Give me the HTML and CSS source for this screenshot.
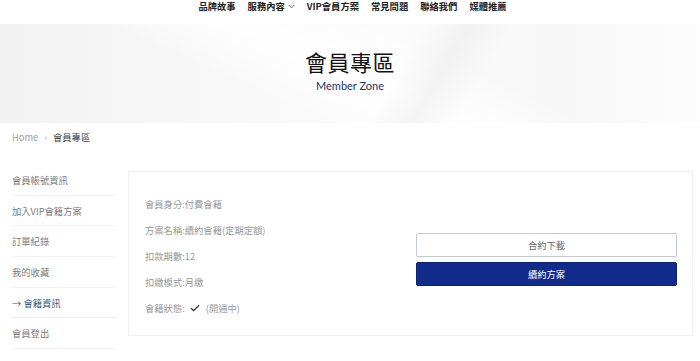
FILE: index.html
```html
<!DOCTYPE html>
<html>
<head>
    <title>會員專區</title>
    <meta name="viewport" content="width=device-width, initial-scale=1" charset="UTF-8">
    <link rel="stylesheet" href="styles.css">
</head>
<body>
<header class="topnav">
    <a href="#">品牌故事</a>
    <a href="#">服務內容 <svg class="chev" width="7" height="5" viewBox="0 0 7 5"><path d="M0.8 1 L3.5 3.8 L6.2 1" fill="none" stroke="#555" stroke-width="0.9"/></svg></a>
    <a href="#" class="vip">VIP會員方案</a>
    <a href="#">常見問題</a>
    <a href="#">聯絡我們</a>
    <a href="#">媒體推薦</a>
</header>

<section class="hero">
    <h1>會員專區</h1>
    <p>Member Zone</p>
</section>

<nav class="crumbs">
    <a href="#">Home</a>
    <span class="sep">›</span>
    <span class="here">會員專區</span>
</nav>

<main class="member">
    <ul class="side">
        <li><a href="#">會員帳號資訊</a></li>
        <li><a href="#">加入VIP會籍方案</a></li>
        <li><a href="#">訂單紀錄</a></li>
        <li><a href="#">我的收藏</a></li>
        <li class="active"><a href="#">→ 會籍資訊</a></li>
        <li><a href="#">會員登出</a></li>
    </ul>

    <div class="card">
        <div class="info">
            <p>會員身分:付費會籍</p>
            <p>方案名稱:續約會籍(定期定額)</p>
            <p>扣款期數:12</p>
            <p>扣繳模式:月繳</p>
            <p>會籍狀態: <svg class="check" width="10" height="8" viewBox="0 0 10 8"><path d="M1 4.2 L3.6 6.6 L9 1.2" fill="none" stroke="#333" stroke-width="1.3"/></svg> (開通中)</p>
        </div>
        <div class="actions">
            <button class="btn outline">合約下載</button>
            <button class="btn solid">續約方案</button>
        </div>
    </div>
</main>
</body>
</html>
```
FILE: styles.css
```css
body {
    margin: 0;
    background: #fff;
    font-family: "Noto Sans CJK TC", "Noto Sans", sans-serif;
    color: #666;
}

a { text-decoration: none; color: inherit; }

/* top menu */
.topnav {
    display: flex;
    justify-content: center;
    align-items: center;
    gap: 12px;
    padding-left: 5px;
    padding-bottom: 12px;
    box-sizing: border-box;
    height: 24px;
    font-size: 9.3px;
    font-weight: 700;
    color: #222;
}
.topnav a { display: flex; align-items: center; gap: 3px; line-height: 12px; }

/* banner */
.hero {
    height: 99px;
    text-align: center;
    padding-top: 24px;
    box-sizing: border-box;
    background:
        linear-gradient(120deg, rgba(255,255,255,0) 56%, rgba(232,232,232,0.45) 62%, rgba(255,255,255,0) 68%),
        linear-gradient(25deg, rgba(255,255,255,0) 35%, rgba(255,255,255,0.9) 50%, rgba(255,255,255,0) 65%),
        linear-gradient(90deg, #f2f2f2 0%, #f8f8f8 30%, #fcfcfc 55%, #f7f7f7 80%, #fdfdfd 100%);
}
.hero h1 {
    margin: 0;
    font-size: 22px;
    font-weight: 400;
    line-height: 26px;
    color: #111;
    letter-spacing: 0.5px;
}
.hero p {
    margin: 6px 0 0;
    font-family: Lato, "Noto Sans", sans-serif;
    font-size: 11px;
    line-height: 12px;
    color: #1e3370;
}

/* breadcrumb */
.crumbs {
    display: flex;
    align-items: center;
    padding: 8px 12px 22px;
    font-size: 9.3px;
    line-height: 12px;
    color: #a0a0a0;
}
.crumbs .sep { margin: 0 6px 0 6px; }
.crumbs .here { color: #444; }

/* member area */
.member {
    display: flex;
    align-items: flex-start;
    gap: 12px;
    padding: 0 7px 0 12px;
}

.side {
    list-style: none;
    margin: 0;
    padding: 0;
    width: 104px;
    flex-shrink: 0;
    font-size: 9.3px;
}
.side li {
    height: 30.7px;
    display: flex;
    align-items: center;
    border-bottom: 1px solid #f1f1f1;
    box-sizing: border-box;
    color: #7a7a7a;
}
.side li.active { color: #3d5580; }

.card {
    flex: 1;
    margin-top: 6px;
    height: 165px;
    box-sizing: border-box;
    border: 1px solid #f0f0f0;
    display: flex;
    padding: 19px 15px 14px 16px;
}
.info { flex: 1; }
.info p {
    margin: 0;
    height: 26px;
    display: flex;
    align-items: center;
    gap: 4px;
    font-size: 9.3px;
    color: #999;
}
.check { margin: 0 2px 0 1px; }

.actions {
    width: 261px;
    display: flex;
    flex-direction: column;
    gap: 5px;
    margin-top: 42px;
}
.btn {
    height: 24px;
    border-radius: 2px;
    font-family: "Noto Sans CJK TC", "Noto Sans", sans-serif;
    font-size: 9.3px;
    cursor: pointer;
}
.btn.outline { background: #fff; border: 1px solid #c4cad5; color: #666; }
.btn.solid { background: #102b8a; border: 1px solid #0c2272; color: #fff; }
```
